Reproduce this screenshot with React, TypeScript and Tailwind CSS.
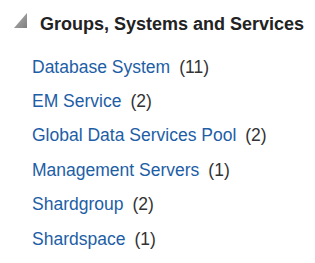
import React from 'react';

const items = [
  { name: 'Database System', count: 11 },
  { name: 'EM Service', count: 2 },
  { name: 'Global Data Services Pool', count: 2 },
  { name: 'Management Servers', count: 1 },
  { name: 'Shardgroup', count: 2 },
  { name: 'Shardspace', count: 1 },
];

function DisclosureTriangle() {
  return (
    <svg width="13" height="15" viewBox="0 0 13 15" className="block shrink-0">
      <defs>
        <linearGradient id="tri" x1="0" y1="0" x2="1" y2="1">
          <stop offset="0" stopColor="#b4b4b4" />
          <stop offset="1" stopColor="#7e7e7e" />
        </linearGradient>
      </defs>
      <polygon points="13,0 13,15 0,15" fill="url(#tri)" />
    </svg>
  );
}

export default function App() {
  return (
    <div className="w-[315px] h-[263px] bg-white font-['Liberation_Sans',Arial,sans-serif]">
      <div className="flex items-start pl-[14px] pt-[14px]">
        <div className="mt-[-1px]">
          <DisclosureTriangle />
        </div>
        <h2 className="ml-[13px] text-[18px] leading-[20px] font-bold text-[#222222] whitespace-nowrap">
          Groups, Systems and Services
        </h2>
      </div>

      <ul className="mt-[15.5px] pl-[32px]">
        {items.map((item) => (
          <li key={item.name} className="flex text-[17.5px] leading-[34.4px] whitespace-nowrap">
            <a href="#" className="text-[#1d5ea6]">
              {item.name}
            </a>
            <span className="ml-[9px] text-[#333333]">({item.count})</span>
          </li>
        ))}
      </ul>
    </div>
  );
}
